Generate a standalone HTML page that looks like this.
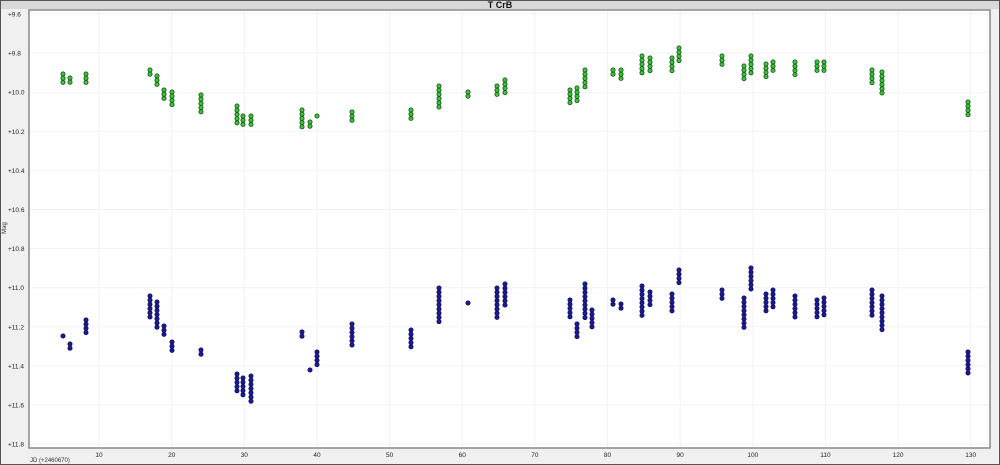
<!DOCTYPE html>
<html><head><meta charset="utf-8"><style>
html,body{margin:0;padding:0;background:#f0f0f0;width:1000px;height:465px;overflow:hidden;font-family:"Liberation Sans",sans-serif}
</style></head><body>
<svg id="s" width="1000" height="465" xmlns="http://www.w3.org/2000/svg" style="position:absolute;left:0;top:0">
<rect x="0.5" y="0.5" width="999" height="464" fill="#f0f0f0" stroke="#555"/>
<rect x="1" y="1" width="998" height="8" fill="#d8d8d8"/>
<text x="500" y="8" font-size="9" font-weight="bold" text-anchor="middle" fill="#111">T CrB</text>
<rect x="29" y="10" width="961" height="438" fill="#fff" stroke="#888" stroke-width="1.5"/>
<g id="grid"></g>
<g id="lab" font-size="6.5" fill="#222"></g>
<text x="6" y="228" font-size="6" fill="#333" transform="rotate(-90 6 228)" text-anchor="middle">Mag</text>
<text x="30" y="462" font-size="6" fill="#333">JD (+2460670)</text>
<g id="pts"></g>
</svg>
<script>
var ns="http://www.w3.org/2000/svg";
function el(p,t,a,txt){var e=document.createElementNS(ns,t);for(var k in a)e.setAttribute(k,a[k]);if(txt)e.textContent=txt;document.getElementById(p).appendChild(e);}
var mags=["+9.6","+9.8","+10.0","+10.2","+10.4","+10.6","+10.8","+11.0","+11.2","+11.4","+11.6","+11.8"];
for(var i=0;i<12;i++){var y=14+i*39.1;
el("grid","line",{x1:30,x2:989,y1:y,y2:y,stroke:"#f2f2f2","stroke-width":1});
el("lab","text",{x:8,y:y+2.5},mags[i]);}
for(var d=10;d<=130;d+=10){var x=26.4+d*7.264;
el("grid","line",{x1:x,x2:x,y1:11,y2:447,stroke:"#f2f2f2","stroke-width":1});
el("lab","text",{x:x,y:457,"text-anchor":"middle"},""+d);}
var g=[[63,74,86],[70,78,86],[86,74,84],[150,70,78],[157,76,86],[164,90,100],[172,92,106],[201,95,112],[237,106,126],[243,116,128],[251,116,126],[302,110,130],[310,122,130],[317,116,120],[352,112,124],[411,110,122],[439,86,108],[468,92,98],[497,86,96],[505,80,94],[570,90,104],[577,88,102],[585,70,90],[613,70,78],[621,70,80],[642,56,76],[650,58,72],[672,58,72],[679,48,62],[722,56,68],[744,66,80],[751,56,76],[766,64,78],[773,62,74],[795,62,76],[817,62,74],[824,62,72],[872,70,86],[882,72,94],[968,102,116]];
var b=[[63,336,340],[70,344,352],[86,320,334],[150,296,320],[157,302,330],[164,326,336],[172,342,354],[201,350,356],[237,374,392],[243,378,398],[251,376,402],[302,332,340],[310,370,372],[317,352,366],[352,324,346],[411,330,350],[439,288,322],[468,303,305],[497,288,318],[505,284,306],[570,300,320],[577,324,340],[585,284,318],[592,310,330],[613,300,308],[621,304,310],[642,286,316],[650,292,308],[672,294,312],[679,270,286],[722,290,302],[744,298,330],[751,268,290],[766,294,312],[773,290,310],[795,296,318],[817,300,318],[824,298,318],[872,290,318],[882,296,330],[968,352,374]];
function draw(arr,fill,st){arr.forEach(function(c){for(var y=c[1];y<=c[2]+0.1;y+=4.2){el("pts","circle",{cx:c[0],cy:y,r:2.1,fill:fill,stroke:st,"stroke-width":0.8});}});}
draw(g,"#3ec43e","#0d4d0d");draw(b,"#1c1c9a","#0a0a50");
</script>
</body></html>
